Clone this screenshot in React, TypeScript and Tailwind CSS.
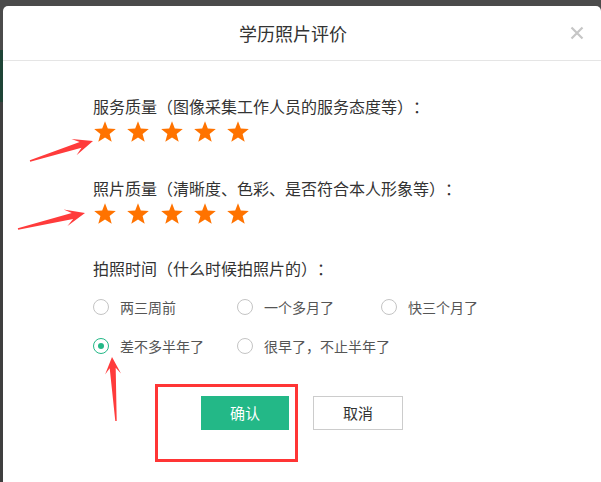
import React from "react";

const font = { fontFamily: '"Noto Sans CJK SC", "Noto Sans", sans-serif' };

function Star() {
  return (
    <svg width="24" height="24" viewBox="0 0 24 24">
      <polygon
        points="12,1.2 14.8,8.6 22.8,9 16.6,14 18.7,21.8 12,17.4 5.3,21.8 7.4,14 1.2,9 9.2,8.6"
        fill="#ff7300"
      />
    </svg>
  );
}

function Stars() {
  return (
    <div className="flex gap-[9.3px] h-[24px] items-center">
      {[0, 1, 2, 3, 4].map((i) => (
        <Star key={i} />
      ))}
    </div>
  );
}

function Radio({ label, checked }: { label: string; checked?: boolean }) {
  return (
    <div className="flex items-center w-[144px] h-[24px] shrink-0">
      <div
        className={
          checked
            ? "w-[16px] h-[16px] shrink-0 rounded-full border border-[#23b887] flex items-center justify-center"
            : "w-[16px] h-[16px] shrink-0 rounded-full border border-[#c4c4c4]"
        }
      >
        {checked && <div className="w-[6px] h-[6px] rounded-full bg-[#23b887]" />}
      </div>
      <span className="ml-[11px] text-[14px] leading-[24px] text-[#555] whitespace-nowrap">{label}</span>
    </div>
  );
}

function arrowPoints(
  tx: number,
  ty: number,
  px: number,
  py: number,
  headLen: number,
  headW: number,
  tailW: number,
  baseW: number
) {
  const dx = px - tx;
  const dy = py - ty;
  const len = Math.hypot(dx, dy);
  const ux = dx / len;
  const uy = dy / len;
  const nx = -uy;
  const ny = ux;
  const bx = px - ux * headLen;
  const by = py - uy * headLen;
  const neck = headLen * 0.35;
  const cx = px - ux * (headLen - neck);
  const cy = py - uy * (headLen - neck);
  const pts: [number, number][] = [
    [tx + nx * tailW / 2, ty + ny * tailW / 2],
    [cx + nx * baseW / 2, cy + ny * baseW / 2],
    [bx + nx * headW / 2, by + ny * headW / 2],
    [px, py],
    [bx - nx * headW / 2, by - ny * headW / 2],
    [cx - nx * baseW / 2, cy - ny * baseW / 2],
    [tx - nx * tailW / 2, ty - ny * tailW / 2],
  ];
  return pts.map((p) => p[0].toFixed(1) + "," + p[1].toFixed(1)).join(" ");
}

export default function App() {
  return (
    <div className="relative w-[601px] h-[482px] bg-[#4b4b4b] overflow-hidden flex [text-spacing-trim:space-all]" style={font}>
      <div className="w-[3px] flex flex-col shrink-0">
        <div className="h-[50px] bg-[#4b4b4b]" />
        <div className="h-[52px] bg-[#1e4436]" />
        <div className="flex-1 bg-[#3f3f3f]" />
      </div>
      <div className="mt-[6px] w-[598px] bg-white rounded-t-[5px] flex flex-col">
        <div className="h-[55px] flex items-center border-b border-[#e5e5e5] pl-[24px] pr-[6px]">
          <div className="flex-1 text-center text-[18px] leading-[24px] text-[#333]">学历照片评价</div>
          <div className="w-[36px] h-[24px] flex items-center justify-center">
            <svg width="14" height="14" viewBox="0 0 14 14">
              <path d="M1.5 1.5 L12.5 12.5 M12.5 1.5 L1.5 12.5" stroke="#c6c6c6" strokeWidth="2.2" />
            </svg>
          </div>
        </div>
        <div className="pl-[90px] pt-[33px] flex flex-col">
          <div className="text-[16px] leading-[24px] text-[#333] whitespace-nowrap">服务质量（图像采集工作人员的服务态度等）：</div>
          <div className="mt-[2px]">
            <Stars />
          </div>
          <div className="mt-[32px] text-[16px] leading-[24px] text-[#333] whitespace-nowrap">照片质量（清晰度、色彩、是否符合本人形象等）：</div>
          <div className="mt-[2px]">
            <Stars />
          </div>
          <div className="mt-[30px] text-[16px] leading-[24px] text-[#333] whitespace-nowrap">拍照时间（什么时候拍照片的）：</div>
          <div className="mt-[15px] flex">
            <Radio label="两三周前" />
            <Radio label="一个多月了" />
            <Radio label="快三个月了" />
          </div>
          <div className="mt-[15px] flex">
            <Radio label="差不多半年了" checked />
            <Radio label="很早了，不止半年了" />
          </div>
        </div>
        <div className="mt-[38px] flex justify-center gap-[24px]">
          <button className="w-[88px] h-[34px] bg-[#23b887] text-white text-[15px]">确认</button>
          <button className="w-[90px] h-[34px] border border-[#cccccc] bg-white text-[#333] text-[15px]">取消</button>
        </div>
      </div>

      <div className="absolute left-[155px] top-[384px] w-[143px] h-[78px] border-[3px] border-[#ff3535]" />
      <svg className="absolute left-0 top-0" width="601" height="482" viewBox="0 0 601 482">
        <polygon points={arrowPoints(30, 161, 93, 141, 20, 17, 1.5, 6)} fill="#ff3b3b" />
        <polygon points={arrowPoints(18, 229, 85, 213, 20, 17, 1.5, 6)} fill="#ff3b3b" />
        <polygon points={arrowPoints(116, 421, 112, 357, 17, 16, 1.5, 6)} fill="#ff3b3b" />
      </svg>
    </div>
  );
}
